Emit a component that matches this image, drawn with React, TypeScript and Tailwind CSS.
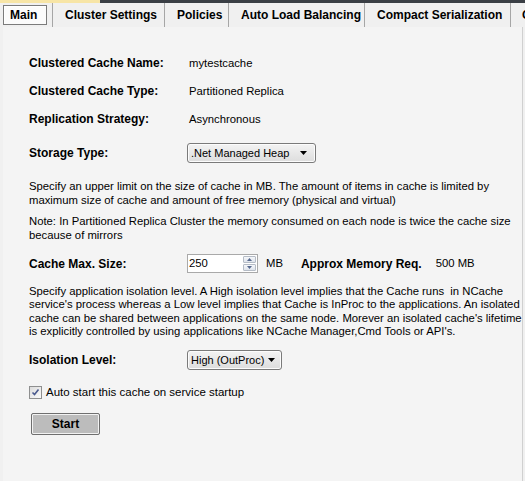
import React from 'react';

const tabs = [
  { label: 'Main', w: 'w-[53px]' },
  { label: 'Cluster Settings', w: 'w-[112px]' },
  { label: 'Policies', w: 'w-[64px]' },
  { label: 'Auto Load Balancing', w: 'w-[136px]' },
  { label: 'Compact Serialization', w: 'w-[146px]' },
];

function Dropdown({ value, width }: { value: string; width: string }) {
  return (
    <div
      className={`${width} h-[20px] flex items-center justify-between gap-[4px] pl-[3px] pr-[8px] rounded-[3px] border border-[#7a7a7a] bg-gradient-to-b from-[#f3f3f3] to-[#dddddd] shadow-[inset_0_0_0_1px_#fcfcfc] text-[11px]`}
    >
      <span className="whitespace-nowrap">{value}</span>
      <svg width="7" height="4" viewBox="0 0 7 4" className="shrink-0">
        <path d="M0 0h7L3.5 4z" fill="#000" />
      </svg>
    </div>
  );
}

function Spinner() {
  return (
    <div className="w-[71px] h-[19px] flex items-stretch border border-[#a9a9a9] bg-white">
      <span className="flex-1 pl-[1px] leading-[17px]">250</span>
      <div className="w-[14px] flex flex-col gap-[1px] py-[1px] pr-[1px]">
        <div className="flex-1 flex items-center justify-center rounded-[1px] border border-[#b5bcc6] bg-gradient-to-b from-[#f5f7fa] to-[#dfe4ec]">
          <svg width="5" height="3" viewBox="0 0 5 3">
            <path d="M0 3L2.5 0L5 3z" fill="#56698e" />
          </svg>
        </div>
        <div className="flex-1 flex items-center justify-center rounded-[1px] border border-[#b5bcc6] bg-gradient-to-b from-[#f5f7fa] to-[#dfe4ec]">
          <svg width="5" height="3" viewBox="0 0 5 3">
            <path d="M0 0h5L2.5 3z" fill="#56698e" />
          </svg>
        </div>
      </div>
    </div>
  );
}

export default function App() {
  return (
    <div
      className="w-[525px] h-[481px] flex flex-col bg-[#f0f0f0] text-[11.3px] text-black overflow-hidden"
      style={{ fontFamily: '"Liberation Sans", Arial, sans-serif' }}
    >
      {/* window edge */}
      <div className="h-[3px] flex shrink-0">
        <div className="w-[100px] bg-[#f7e5a6]" />
        <div className="flex-1 bg-[#3a3f45]" />
      </div>

      {/* Tab strip */}
      <div className="h-[24px] flex items-center shrink-0 overflow-hidden">
        {tabs.map((t, i) => (
          <div key={t.label} className={`${t.w} h-full flex items-center border-r border-[#a6a6a6] shrink-0 ${i === 0 ? 'pl-[3px] pr-[5px]' : 'pl-[12px]'}`}>
            {i === 0 ? (
              <div className="w-[46px] h-[20px] flex items-center pl-[6px] font-bold text-[12px] bg-[#fbfbfb] border border-[#7b7b7b] shadow-[inset_1px_1px_0_#ffffff]">
                {t.label}
              </div>
            ) : (
              <span className="font-bold text-[12px] whitespace-nowrap">{t.label}</span>
            )}
          </div>
        ))}
        <span className="pl-[11px] font-bold text-[12px] whitespace-nowrap">C</span>
      </div>

      {/* Panel */}
      <div className="flex-1 ml-[3px] mr-[2px] bg-[#f4f4f4] border-r border-[#d0d0d0] pl-[26px] pt-[26px] flex flex-col">
        <div className="h-[20px] flex items-center">
          <span className="w-[160px] font-bold text-[12px]">Clustered Cache Name:</span>
          <span>mytestcache</span>
        </div>
        <div className="h-[20px] mt-[8px] flex items-center">
          <span className="w-[160px] font-bold text-[12px]">Clustered Cache Type:</span>
          <span>Partitioned Replica</span>
        </div>
        <div className="h-[20px] mt-[8px] flex items-center">
          <span className="w-[160px] font-bold text-[12px]">Replication Strategy:</span>
          <span>Asynchronous</span>
        </div>
        <div className="h-[20px] mt-[14px] flex items-center">
          <span className="w-[158px] font-bold text-[12px]">Storage Type:</span>
          <Dropdown value=".Net Managed Heap" width="w-[129px]" />
        </div>

        <p className="mt-[16px] leading-[14px] w-[490px]">
          Specify an upper limit on the size of cache in MB. The amount of items in cache is limited by maximum size of
          cache and amount of free memory (physical and virtual)
        </p>
        <p className="mt-[8px] leading-[13.5px] w-[492px]">
          Note: In Partitioned Replica Cluster the memory consumed on each node is twice the cache size because of
          mirrors
        </p>

        <div className="h-[19px] mt-[12px] flex items-center">
          <span className="w-[158px] font-bold text-[12px]">Cache Max. Size:</span>
          <Spinner />
          <span className="ml-[8px]">MB</span>
          <span className="ml-[18px] font-bold text-[12px]">Approx Memory Req.</span>
          <span className="ml-[14px]">500 MB</span>
        </div>

        <p className="mt-[12px] leading-[13.33px] w-[493px]">
          Specify application isolation level. A High isolation level implies that the Cache runs&nbsp; in NCache
          service's process whereas a Low level implies that Cache is InProc to the applications. An isolated cache can
          be shared between applications on the same node. Morever an isolated cache's lifetime is explicitly controlled
          by using applications like NCache Manager,Cmd Tools or API's.
        </p>

        <div className="h-[20px] mt-[12px] flex items-center">
          <span className="w-[158px] font-bold text-[12px]">Isolation Level:</span>
          <Dropdown value="High (OutProc)" width="w-[95px]" />
        </div>

        <label className="h-[14px] mt-[15px] flex items-center gap-[4px]">
          <span className="w-[13px] h-[13px] flex items-center justify-center border border-[#8e8f8f] bg-gradient-to-br from-[#dcdcdc] to-[#fafafa]">
            <svg width="9" height="9" viewBox="0 0 9 9">
              <path d="M1.5 4.5L3.5 6.5L7.5 1.5" fill="none" stroke="#4a5a8e" strokeWidth="1.6" />
            </svg>
          </span>
          <span className="text-[11.5px]">Auto start this cache on service startup</span>
        </label>

        <button className="mt-[14px] ml-[2px] w-[69px] h-[22px] rounded-[2px] border border-[#6f6f6f] bg-[#bcbcbc] shadow-[inset_0_0_0_1px_#f2f2f2] font-bold text-[12px] flex items-center justify-center">
          Start
        </button>
      </div>
    </div>
  );
}
